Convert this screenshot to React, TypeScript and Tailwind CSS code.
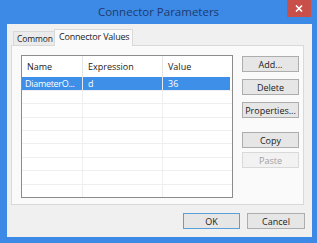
const font = { fontFamily: '"Open Sans", "Noto Sans", "Liberation Sans", sans-serif' };

const btn =
  "h-[16px] w-[57px] flex items-center justify-center border border-[#adadad] bg-[#e6e6e6] text-[9px] text-[#1a1a1a] leading-none";

const rows = Array.from({ length: 8 });

export default function App() {
  return (
    <div
      className="w-[317px] h-[243px] bg-[#3c8ae6] flex flex-col overflow-hidden"
      style={font}
    >
      <div className="h-[24px] grid grid-cols-[1fr_auto_1fr] items-start">
        <div />
        <div className="pt-[3px] text-[11.5px] leading-[18px] text-[#1f3a6e]">
          Connector Parameters
        </div>
        <div className="flex justify-end pr-[6px]">
          <div className="w-[24px] h-[17px] bg-[#c9504a] flex items-center justify-center">
            <svg width="8" height="7" viewBox="0 0 8 7">
              <path d="M1 0.5 L7 6.5 M7 0.5 L1 6.5" stroke="#fff" strokeWidth="1.6" />
            </svg>
          </div>
        </div>
      </div>

      <div className="ml-[7px] mr-[5px] mb-[6px] flex-1 bg-[#f0f0f0] flex flex-col">
        <div className="h-[21px] flex items-end pl-[6px] pt-[5px]">
          <div className="h-[14px] w-[41px] border border-b-0 border-r-0 border-[#d9d9d9] bg-[#ebebeb] text-[8.5px] leading-[13px] pl-[3px] text-[#1a1a1a] whitespace-nowrap tracking-[-0.1px]">
            Common
          </div>
          <div className="h-[17px] w-[79px] -mb-px relative z-10 border border-b-0 border-[#d9d9d9] bg-[#fafafa] text-[9px] leading-[14px] pl-[4px] text-[#1a1a1a] whitespace-nowrap tracking-[-0.2px]">
            Connector Values
          </div>
        </div>

        <div className="ml-[4px] mr-[8px] h-[160px] border border-[#d9d9d9] bg-[#fafafa] flex pl-[9px] pt-[9px] gap-[9px]">
          <div className="w-[212px] h-[143px] border border-[#8c8c8c] bg-white flex flex-col text-[9px] text-[#1a1a1a]">
            <div className="h-[21px] flex items-center">
              <div className="w-[61px] pl-[5px] h-full flex items-center border-r border-[#e5e5e5]">Name</div>
              <div className="w-[80px] pl-[5px] h-full flex items-center border-r border-[#e5e5e5]">Expression</div>
              <div className="flex-1 pl-[5px] h-full flex items-center">Value</div>
            </div>
            <div className="h-[13px] flex bg-[#3d8fe8] text-white leading-[13px] mr-[2px]">
              <div className="w-[61px] pl-[3px] border-r border-[#e8e8e8] whitespace-nowrap overflow-hidden tracking-[-0.3px]">DiameterO...</div>
              <div className="w-[80px] pl-[5px] border-r border-[#e8e8e8]">d</div>
              <div className="flex-1 pl-[5px]">36</div>
            </div>
            {rows.map((_, i) => (
              <div key={i} className="h-[13.5px] flex border-t border-[#efefef]">
                <div className="w-[61px] border-r border-[#efefef]" />
                <div className="w-[80px] border-r border-[#efefef]" />
                <div className="flex-1" />
              </div>
            ))}
          </div>

          <div className="flex flex-col pt-[1px]">
            <div className={btn}>Add...</div>
            <div className={btn + " mt-[7px]"}>Delete</div>
            <div className={btn + " mt-[7px]"}>Properties...</div>
            <div className={btn + " mt-[14px]"}>Copy</div>
            <div className="mt-[4px] h-[16px] w-[57px] flex items-center justify-center border border-[#d9d9d9] bg-[#f2f2f2] text-[9px] text-[#a0a0a0] leading-none">
              Paste
            </div>
          </div>
        </div>

        <div className="flex justify-end gap-[7px] pr-[7px] pt-[8px]">
          <div className="h-[16px] w-[57px] flex items-center justify-center border border-[#5b9fd9] bg-[#e6e6e6] text-[9px] text-[#1a1a1a] leading-none">
            OK
          </div>
          <div className="h-[16px] w-[58px] flex items-center justify-center border border-[#adadad] bg-[#e6e6e6] text-[9px] text-[#1a1a1a] leading-none">
            Cancel
          </div>
        </div>
      </div>
    </div>
  );
}
